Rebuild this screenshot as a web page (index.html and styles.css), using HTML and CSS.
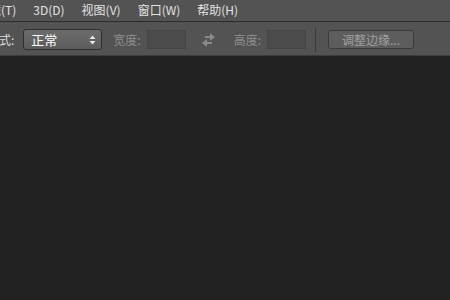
FILE: index.html
```html
<!DOCTYPE html>
<html>
<head>
<meta charset="utf-8">
<link rel="stylesheet" href="styles.css">
</head>
<body>
<div class="menubar">
  <span class="menu-item">滤镜(T)</span>
  <span class="menu-item">3D(D)</span>
  <span class="menu-item">视图(V)</span>
  <span class="menu-item">窗口(W)</span>
  <span class="menu-item">帮助(H)</span>
</div>
<div class="toolbar">
  <span class="label label-style">样式:</span>
  <div class="select">
    <span>正常</span>
    <svg class="spin" width="7" height="10" viewBox="0 0 7 10"><path d="M3.5 0.5 L6.5 4 L0.5 4 Z M3.5 9.5 L6.5 6 L0.5 6 Z" fill="#e6e6e6"/></svg>
  </div>
  <span class="label dim">宽度:</span>
  <div class="field"></div>
  <svg class="swap" width="15" height="14" viewBox="0 0 15 14">
    <path d="M4 3 H9 V0 L14 4 L9 8 V5 H4 Z" fill="#8a8a8a"/>
    <path d="M11 9 H6 V6 L1 10 L6 14 V11 H11 Z" fill="#8a8a8a"/>
  </svg>
  <span class="label dim dim-h">高度:</span>
  <div class="field"></div>
  <div class="sep"></div>
  <div class="btn">调整边缘...</div>
</div>
<div class="canvas"></div>
</body>
</html>
```
FILE: styles.css
```css
* {
  box-sizing: border-box;
}
body {
  margin: 0;
  background: #222222;
  font-family: "Noto Sans CJK SC", "Liberation Sans", sans-serif;
  font-size: 12px;
  overflow: hidden;
}
.menubar {
  height: 22px;
  background: #535353;
  border-bottom: 1px solid #2b2b2b;
  display: flex;
  align-items: center;
  gap: 17px;
  margin-left: -23px;
  color: #e2e2e2;
  padding-bottom: 3px;
}
.menu-item {
  white-space: nowrap;
}
.toolbar {
  height: 34px;
  background: #535353;
  border-bottom: 1px solid #3c3c3c;
  display: flex;
  align-items: center;
  margin-left: -13px;
  padding-top: 2px;
  color: #dcdcdc;
}
.label {
  white-space: nowrap;
}
.label-style {
  margin-right: 9px;
}
.dim {
  color: #8e8e8e;
  margin-left: 11px;
  margin-right: 6px;
}
.dim-h {
  margin-left: 18px;
}
.select {
  width: 79px;
  height: 21px;
  border: 1px solid #2f2f2f;
  border-radius: 3px;
  background: linear-gradient(#6c6c6c, #5c5c5c);
  display: flex;
  align-items: center;
  justify-content: space-between;
  padding: 0 5px 0 7px;
  color: #ffffff;
  font-size: 13px;
}
.field {
  width: 39px;
  height: 19px;
  background: #4b4b4b;
  border: 1px solid #454545;
}
.swap {
  margin-left: 15px;
}
.sep {
  width: 1px;
  height: 24px;
  background: #3a3a3a;
  margin-left: 9px;
}
.btn {
  margin-left: 12px;
  width: 86px;
  height: 19px;
  border: 1px solid #3b3b3b;
  border-radius: 3px;
  background: #5d5d5d;
  color: #a0a0a0;
  display: flex;
  align-items: center;
  justify-content: center;
}
.canvas {
  height: 244px;
}
```
